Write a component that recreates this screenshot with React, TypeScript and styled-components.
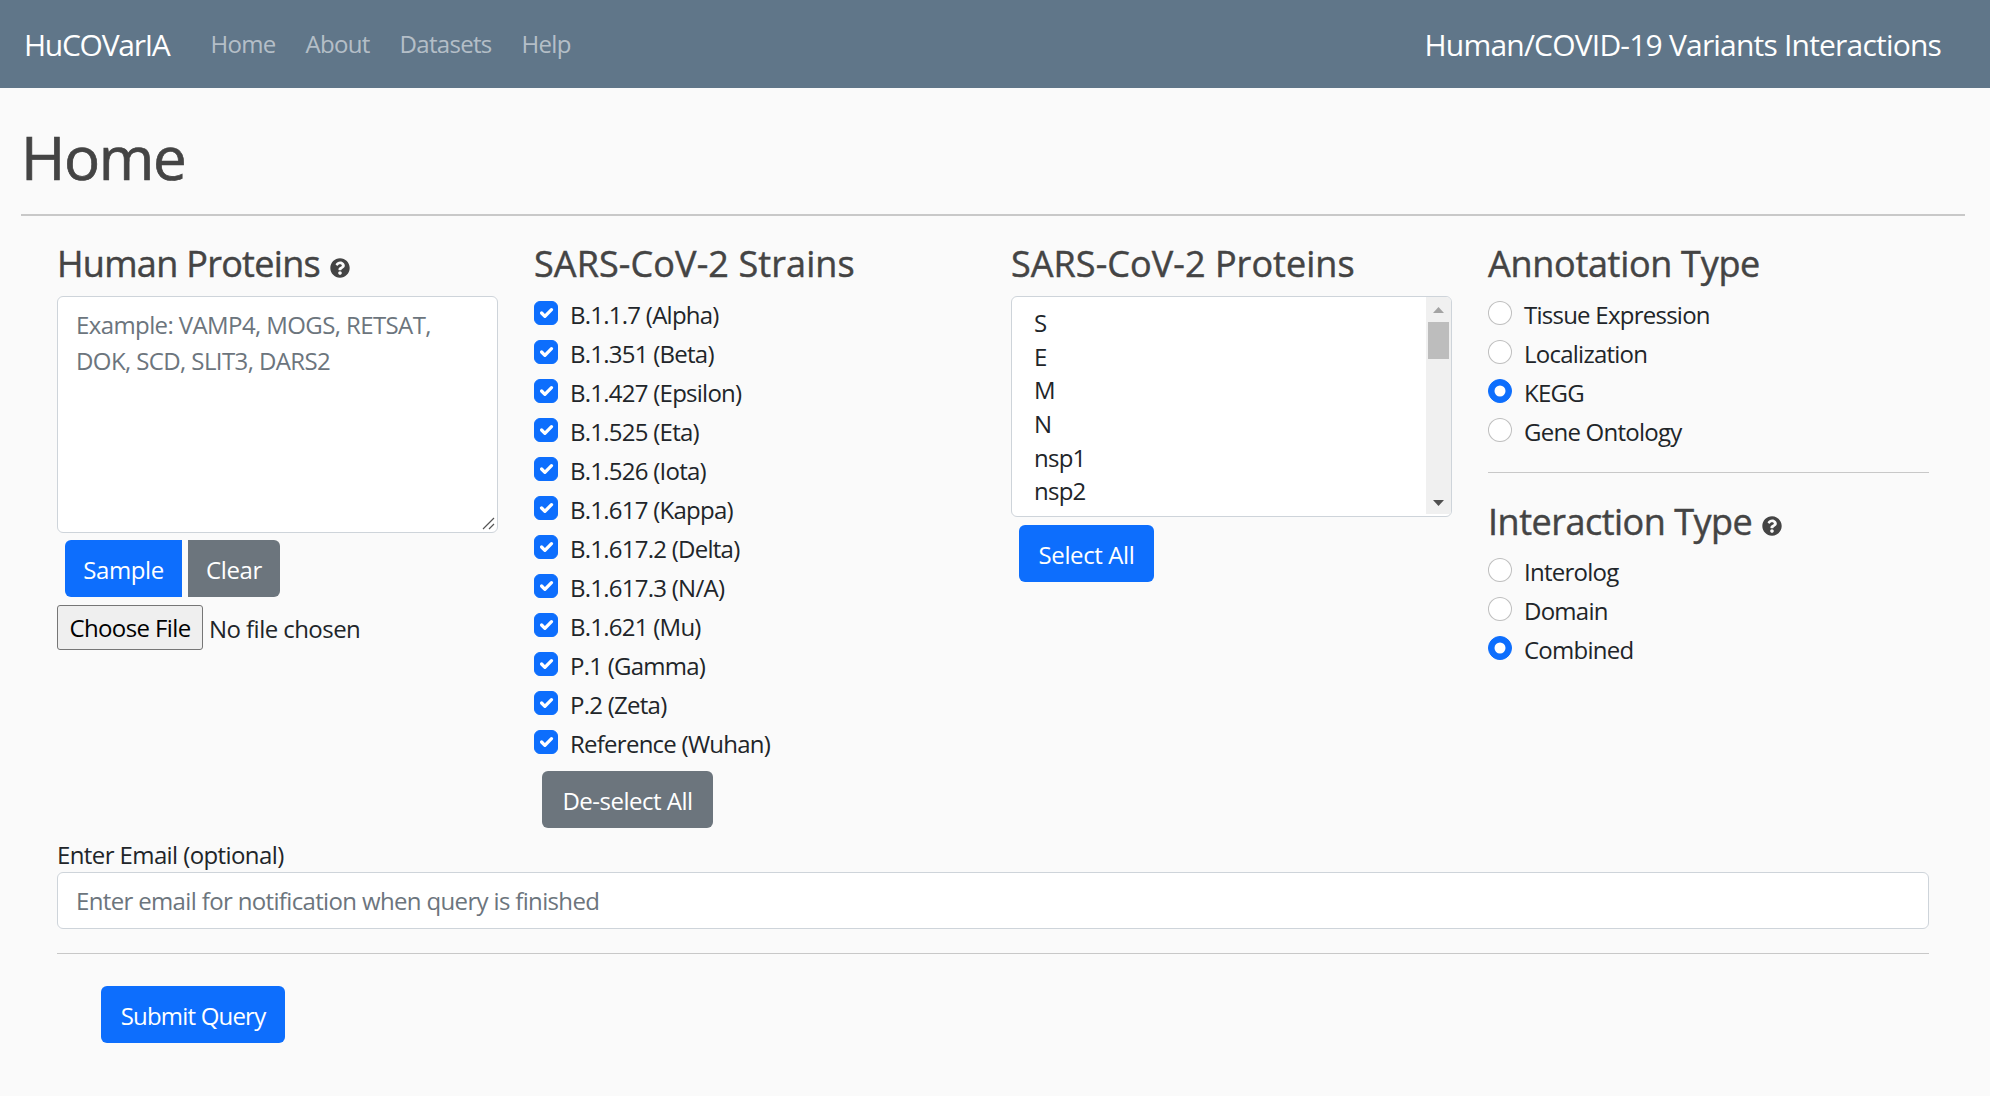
import React from "react";
import styled, { createGlobalStyle } from "styled-components";
import { FaQuestionCircle } from "react-icons/fa";

const FONT = `"Open Sans", "Noto Sans", "Liberation Sans", sans-serif`;

const Global = createGlobalStyle`
  html, body { margin: 0; padding: 0; background: #fafafa; }
  body { font-family: ${FONT}; font-size: 24px; line-height: 1.5; color: #212529; }
  * { box-sizing: border-box; }
`;

const Nav = styled.nav`
  height: 88px;
  background: #607689;
  display: flex;
  align-items: center;
  padding: 0 49px 0 24px;
`;
const Brand = styled.a`
  color: #fff;
  font-size: 30px;
  letter-spacing: -1.27px;
  margin-right: 41px;
`;
const NavLinks = styled.div`
  display: flex;
  gap: 30px;
  flex: 1;
`;
const NavLink = styled.a`
  color: rgba(255, 255, 255, 0.55);
  font-size: 24px;
  letter-spacing: -0.7px;
`;
const NavTitle = styled.span`
  color: #fff;
  font-size: 30px;
  letter-spacing: -0.8px;
`;

const Page = styled.main`
  padding: 33px 25px 0 21px;
`;
const Title = styled.h1`
  margin: 0 0 21px;
  font-size: 60px;
  font-weight: 500;
  line-height: 72px;
  color: #444;
  letter-spacing: -1.3px;
  -webkit-text-stroke: 0.7px #444;
`;
const Rule = styled.hr<{ $thick?: boolean }>`
  margin: 0;
  border: 0;
  height: ${(p) => (p.$thick ? "2px" : "1px")};
  background: #c8c8c8;
`;
const Content = styled.div`
  padding: 25px 36px 0;
`;
const Columns = styled.div`
  display: grid;
  grid-template-columns: repeat(4, 477px);
  margin: 0 -18px;
`;
const Column = styled.section`
  padding: 0 18px;
`;
const Heading = styled.h4<{ $tracking?: number; $below?: number }>`
  margin: 0 0 ${(p) => p.$below ?? 10}px;
  font-size: 36px;
  font-weight: 500;
  line-height: 45px;
  color: #444;
  letter-spacing: ${(p) => p.$tracking ?? -0.7}px;
  -webkit-text-stroke: 0.45px #444;
  display: flex;
  align-items: center;
  svg {
    width: 20px;
    height: 20px;
    margin: 8px 0 0 10px;
  }
`;
const TextAreaWrap = styled.div`
  position: relative;
`;
const TextArea = styled.textarea`
  display: block;
  width: 100%;
  height: 237px;
  padding: 10px 18px;
  font: inherit;
  letter-spacing: -0.6px;
  background: #fff;
  border: 1px solid #ced4da;
  border-radius: 6px;
  outline: none;
  resize: none;
  &::placeholder { color: #6c757d; opacity: 1; }
`;
const ResizeGrip = styled.svg`
  position: absolute;
  right: 3px;
  bottom: 3px;
  width: 13px;
  height: 13px;
  stroke: #555;
  stroke-width: 1.2;
  fill: none;
`;
const Button = styled.button<{
  $variant?: "primary" | "secondary";
  $group?: "left" | "right";
  $width: number;
  $tracking?: number;
}>`
  font: inherit;
  letter-spacing: ${(p) => p.$tracking ?? -0.4}px;
  width: ${(p) => p.$width}px;
  height: 57px;
  padding: 2px 0 0;
  border: 0;
  color: #fff;
  background: ${(p) => (p.$variant === "secondary" ? "#6c757d" : "#0d6efd")};
  border-radius: ${(p) =>
    p.$group === "left" ? "6px 0 0 6px" : p.$group === "right" ? "0 6px 6px 0" : "6px"};
`;
const ButtonRow = styled.div<{ $top: number; $left: number; $gap?: number }>`
  display: flex;
  gap: ${(p) => p.$gap ?? 0}px;
  margin: ${(p) => p.$top}px 0 0 ${(p) => p.$left}px;
`;
const FileRow = styled.div`
  display: flex;
  align-items: center;
  gap: 6px;
  margin-top: 8px;
`;
const FileButton = styled.button`
  font: inherit;
  letter-spacing: -0.6px;
  height: 45px;
  width: 146px;
  padding: 0;
  color: #000;
  background: #efefef;
  border: 1px solid #767676;
  border-radius: 3px;
`;
const FileName = styled.span`
  letter-spacing: -0.55px;
  padding-top: 2px;
`;
const CheckRow = styled.label`
  display: flex;
  height: 36px;
  padding-top: 2px;
  margin-bottom: 3px;
  align-items: center;
  letter-spacing: -0.75px;
`;
const checkSvg = `url("data:image/svg+xml,%3csvg xmlns='http://www.w3.org/2000/svg' viewBox='0 0 20 20'%3e%3cpath fill='none' stroke='%23fff' stroke-linecap='round' stroke-linejoin='round' stroke-width='3' d='M6 10l3 3l6-6'/%3e%3c/svg%3e")`;
const radioSvg = `url("data:image/svg+xml,%3csvg xmlns='http://www.w3.org/2000/svg' viewBox='-4 -4 8 8'%3e%3ccircle r='2' fill='%23fff'/%3e%3c/svg%3e")`;
const Check = styled.input`
  appearance: none;
  flex: none;
  width: 24px;
  height: 24px;
  margin: -4px 12px 0 0;
  background: #fff center / contain no-repeat;
  border: 1px solid rgba(0, 0, 0, 0.25);
  border-radius: ${(p) => (p.type === "radio" ? "50%" : "6px")};
  &:checked {
    background-color: #0d6efd;
    border-color: #0d6efd;
    background-image: ${(p) => (p.type === "radio" ? radioSvg : checkSvg)};
  }
`;
const ListBox = styled.div`
  display: flex;
  height: 221px;
  background: #fff;
  border: 1px solid #ced4da;
  border-radius: 6px;
  overflow: hidden;
`;
const Options = styled.ul`
  flex: 1;
  list-style: none;
  margin: 0;
  padding: 9px 0 0 22px;
`;
const Option = styled.li`
  height: 33.67px;
  line-height: 33.67px;
  letter-spacing: -0.75px;
`;
const ScrollBar = styled.div`
  flex: none;
  width: 25px;
  background: #f0f0f0;
  display: flex;
  flex-direction: column;
  align-items: center;
  margin: 0 0 2px;
`;
const ScrollThumb = styled.div`
  width: 21px;
  height: 37px;
  background: #bdbdbd;
`;
const ScrollArrow = styled.svg<{ $up?: boolean; $color: string }>`
  flex: none;
  width: 11px;
  height: 6px;
  margin: ${(p) => (p.$up ? "10px 0 9px" : "auto 0 8px")};
  fill: ${(p) => p.$color};
`;
const SideRule = styled.hr`
  margin: 23px 0 26px;
  border: 0;
  height: 1px;
  background: #c8c8c8;
`;
const EmailLabel = styled.label`
  display: block;
  margin-top: 10px;
  line-height: 34px;
  letter-spacing: -0.6px;
`;
const EmailInput = styled.input`
  display: block;
  width: 100%;
  height: 57px;
  padding: 0 18px;
  font: inherit;
  letter-spacing: -0.65px;
  background: #fff;
  border: 1px solid #ced4da;
  border-radius: 6px;
  outline: none;
  &::placeholder { color: #6c757d; opacity: 1; }
`;
const BottomRule = styled(Rule)`
  margin-top: 24px;
`;

const strains = [
  "B.1.1.7 (Alpha)", "B.1.351 (Beta)", "B.1.427 (Epsilon)", "B.1.525 (Eta)",
  "B.1.526 (Iota)", "B.1.617 (Kappa)", "B.1.617.2 (Delta)", "B.1.617.3 (N/A)",
  "B.1.621 (Mu)", "P.1 (Gamma)", "P.2 (Zeta)", "Reference (Wuhan)",
];
const proteins = ["S", "E", "M", "N", "nsp1", "nsp2"];
const annotations = ["Tissue Expression", "Localization", "KEGG", "Gene Ontology"];
const interactions = ["Interolog", "Domain", "Combined"];

export default function App() {
  return (
    <>
      <Global />
      <Nav>
        <Brand>HuCOVarIA</Brand>
        <NavLinks>
          <NavLink>Home</NavLink>
          <NavLink>About</NavLink>
          <NavLink>Datasets</NavLink>
          <NavLink>Help</NavLink>
        </NavLinks>
        <NavTitle>Human/COVID-19 Variants Interactions</NavTitle>
      </Nav>
      <Page>
        <Title>Home</Title>
        <Rule $thick />
        <Content>
          <Columns>
            <Column>
              <Heading>Human Proteins <FaQuestionCircle /></Heading>
              <TextAreaWrap>
                <TextArea placeholder="Example: VAMP4, MOGS, RETSAT, DOK, SCD, SLIT3, DARS2" />
                <ResizeGrip viewBox="0 0 13 13">
                  <path d="M1 12L12 1M7 12L12 7" />
                </ResizeGrip>
              </TextAreaWrap>
              <ButtonRow $top={7} $left={8} $gap={6}>
                <Button $width={117} $group="left">Sample</Button>
                <Button $width={92} $variant="secondary" $group="right">Clear</Button>
              </ButtonRow>
              <FileRow>
                <FileButton>Choose File</FileButton>
                <FileName>No file chosen</FileName>
              </FileRow>
            </Column>
            <Column>
              <Heading $tracking={0.1}>SARS-CoV-2 Strains</Heading>
              {strains.map((s) => (
                <CheckRow key={s}>
                  <Check type="checkbox" defaultChecked />
                  {s}
                </CheckRow>
              ))}
              <ButtonRow $top={10} $left={8}>
                <Button $width={171} $variant="secondary" $tracking={-0.5}>De-select All</Button>
              </ButtonRow>
            </Column>
            <Column>
              <Heading $tracking={0.05}>SARS-CoV-2 Proteins</Heading>
              <ListBox>
                <Options>
                  {proteins.map((p) => <Option key={p}>{p}</Option>)}
                </Options>
                <ScrollBar>
                  <ScrollArrow $up $color="#a3a3a3" viewBox="0 0 11 6"><path d="M5.5 0L11 6H0z" /></ScrollArrow>
                  <ScrollThumb />
                  <ScrollArrow $color="#505050" viewBox="0 0 11 6"><path d="M0 0h11L5.5 6z" /></ScrollArrow>
                </ScrollBar>
              </ListBox>
              <ButtonRow $top={8} $left={8}>
                <Button $width={135}>Select All</Button>
              </ButtonRow>
            </Column>
            <Column>
              <Heading $tracking={-0.3}>Annotation Type</Heading>
              {annotations.map((a) => (
                <CheckRow key={a}>
                  <Check type="radio" name="annotation" defaultChecked={a === "KEGG"} />
                  {a}
                </CheckRow>
              ))}
              <SideRule />
              <Heading $tracking={-0.5} $below={9}>Interaction Type <FaQuestionCircle /></Heading>
              {interactions.map((a) => (
                <CheckRow key={a}>
                  <Check type="radio" name="interaction" defaultChecked={a === "Combined"} />
                  {a}
                </CheckRow>
              ))}
            </Column>
          </Columns>
          <EmailLabel>Enter Email (optional)</EmailLabel>
          <EmailInput placeholder="Enter email for notification when query is finished" />
          <BottomRule />
          <ButtonRow $top={32} $left={44}>
            <Button $width={184} $tracking={-0.8}>Submit Query</Button>
          </ButtonRow>
        </Content>
      </Page>
    </>
  );
}
